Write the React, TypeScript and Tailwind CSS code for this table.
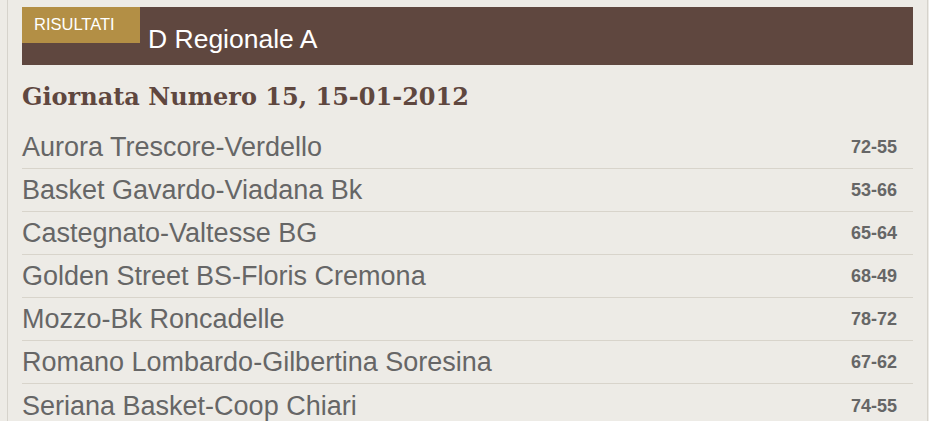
const MATCHES = [
  ['Aurora Trescore-Verdello', '72-55'],
  ['Basket Gavardo-Viadana Bk', '53-66'],
  ['Castegnato-Valtesse BG', '65-64'],
  ['Golden Street BS-Floris Cremona', '68-49'],
  ['Mozzo-Bk Roncadelle', '78-72'],
  ['Romano Lombardo-Gilbertina Soresina', '67-62'],
  ['Seriana Basket-Coop Chiari', '74-55'],
]

export default function App() {
  return (
    <div className="h-[421px] overflow-hidden bg-[#edebe6] font-['Liberation_Sans',Arial,sans-serif]">
      <div className="ml-[7px] mr-px h-full border-l border-r border-[#d6d3cc] pl-[14px] pr-[14px] pt-[7px]">
        {/* testata */}
        <div className="flex h-[58px] items-start bg-[#5f473f]">
          <div className="h-[36px] w-[118px] shrink-0 bg-[#b38f45] pl-[12px] pt-[8px] text-[16.5px] leading-[19px] text-white">
            RISULTATI
          </div>
          <div className="pl-[8px] pt-[17px] text-[26.5px] leading-[30px] text-white">D Regionale A</div>
        </div>

        <h2 className="mt-[18px] font-['DejaVu_Serif',Georgia,serif] text-[24px] font-bold leading-[28px] text-[#5f473f]">
          Giornata Numero 15, 15-01-2012
        </h2>

        <div className="mt-[15px]">
          {MATCHES.map(([name, score], i) => (
            <div
              key={name}
              className={`flex h-[43px] items-center justify-between pr-[16px] ${i < MATCHES.length - 1 ? 'border-b border-[#d8d4cb]' : ''}`}
            >
              <span className="text-[27px] leading-[30px] text-[#666]">{name}</span>
              <span className="text-[18px] font-bold leading-[20px] text-[#666]">{score}</span>
            </div>
          ))}
        </div>
      </div>
    </div>
  )
}
